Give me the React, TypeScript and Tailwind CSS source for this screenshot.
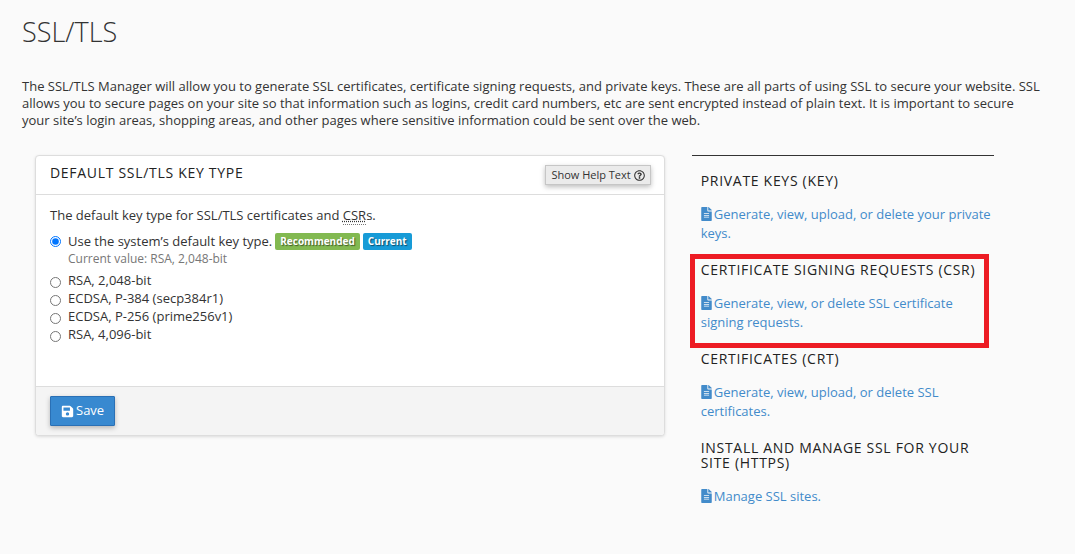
import { useState } from "react";
import { FaFileAlt, FaRegQuestionCircle, FaSave } from "react-icons/fa";

const keyTypes = [
  { value: "rsa-2048", label: "RSA, 2,048-bit" },
  { value: "ecdsa-secp384r1", label: "ECDSA, P-384 (secp384r1)" },
  { value: "ecdsa-prime256v1", label: "ECDSA, P-256 (prime256v1)" },
  { value: "rsa-4096", label: "RSA, 4,096-bit" },
];

const sections = [
  {
    title: "Private Keys (KEY)",
    link: "Generate, view, upload, or delete your private keys.",
  },
  {
    title: "Certificate Signing Requests (CSR)",
    link: "Generate, view, or delete SSL certificate signing requests.",
    highlighted: true,
  },
  {
    title: "Certificates (CRT)",
    link: "Generate, view, upload, or delete SSL certificates.",
  },
  {
    title: "Install and Manage SSL for your site (HTTPS)",
    link: "Manage SSL sites.",
  },
];

function KeyTypePanel() {
  const [keyType, setKeyType] = useState("system");

  return (
    <form
      onSubmit={(e) => e.preventDefault()}
      className="self-start overflow-hidden rounded-[4px] border border-[#dddddd] bg-white shadow-[0_1px_3px_rgba(0,0,0,0.12)]"
    >
      <div className="flex items-start justify-between border-b border-[#dddddd] py-[9px] pr-[13px] pl-[14px]">
        <h2 className="text-[14px] leading-[16px] font-medium tracking-wider text-[#222222] uppercase">
          Default SSL/TLS Key Type
        </h2>
        <button
          type="button"
          className="flex h-5 items-center gap-[3px] border border-[#c6c6c6] bg-[#ebebeb] px-[5px] text-[11px] leading-[18px] shadow-[0_2px_5px_rgba(0,0,0,0.26)]"
        >
          Show Help Text
          <FaRegQuestionCircle className="size-[11px]" />
        </button>
      </div>

      <div className="px-[14px] pt-[11px] pb-[43px]">
        <p className="mb-2 leading-[18px]">
          The default key type for SSL/TLS certificates and{" "}
          <abbr
            title="Certificate Signing Requests"
            className="border-b border-dotted border-[#777777] underline decoration-dotted"
          >
            CSR
          </abbr>
          s.
        </p>
        <div className="mb-[3px] flex items-start gap-[7px]">
          <input
            type="radio"
            id="system"
            name="keyType"
            checked={keyType === "system"}
            onChange={() => setKeyType("system")}
            className="mt-1 size-[11px]"
          />
          <div>
            <label htmlFor="system" className="flex items-end leading-[18px]">
              <span className="mr-[3px]">Use the system’s default key type.</span>
              <span className="mr-[3px] rounded-[2px] bg-[#82b951] px-[5px] text-[10px] leading-[17px] font-bold text-white [text-shadow:1px_1px_1px_rgba(0,0,0,0.5)]">
                Recommended
              </span>
              <span className="rounded-[2px] bg-[#179bd7] px-[5px] text-[10px] leading-[17px] font-bold text-white [text-shadow:1px_1px_1px_rgba(0,0,0,0.5)]">
                Current
              </span>
            </label>
            <p className="text-[12px] leading-[18px] text-[#777777]">
              Current value: RSA, 2,048-bit
            </p>
          </div>
        </div>
        {keyTypes.map((type) => (
          <div key={type.value} className="flex items-start gap-[7px]">
            <input
              type="radio"
              id={type.value}
              name="keyType"
              checked={keyType === type.value}
              onChange={() => setKeyType(type.value)}
              className="mt-[6px] size-[11px]"
            />
            <label htmlFor={type.value} className="leading-[18px]">
              {type.label}
            </label>
          </div>
        ))}
      </div>

      <div className="border-t border-[#dddddd] bg-[#f4f4f4] px-[14px] py-[9px]">
        <button
          type="submit"
          className="flex h-[30px] items-center gap-[2px] rounded-[1px] border border-[#2a70b5] bg-[#3889d0] px-[10px] text-white shadow-[0_2px_5px_rgba(0,0,0,0.26)]"
        >
          <FaSave className="size-[13px]" />
          Save
        </button>
      </div>
    </form>
  );
}

export default function App() {
  return (
    <div className="min-h-screen bg-[#fafafa] pt-4 pr-[33px] pb-8 pl-[22px] font-['Open_Sans',sans-serif] text-[13px] text-[#333333]">
      <h1 className="text-[27px] leading-[32px] font-light">SSL/TLS</h1>
      <p className="mt-[30px] leading-[17px]">
        The SSL/TLS Manager will allow you to generate SSL certificates, certificate signing
        requests, and private keys. These are all parts of using SSL to secure your website. SSL
        allows you to secure pages on your site so that information such as logins, credit card
        numbers, etc are sent encrypted instead of plain text. It is important to secure your site’s
        login areas, shopping areas, and other pages where sensitive information could be sent over
        the web.
      </p>

      <div className="mt-[26px] grid grid-cols-[25fr_12fr] gap-[27px] pr-12 pl-[13px]">
        <KeyTypePanel />

        <aside className="border-t border-[#333333] pt-[17px] pl-[9px]">
          {sections.map((section) => (
            <section key={section.title} className="relative mb-[19px]">
              <h2 className="mb-[17px] text-[14px] leading-[15px] font-medium tracking-wider text-[#222222] uppercase">
                {section.title}
              </h2>
              <a href="#" className="block leading-[19px] text-[#428bca]">
                <FaFileAlt className="mr-[2px] inline h-[14px] w-[11px] align-[-2px]" />
                {section.link}
              </a>
              {section.highlighted && (
                <div className="pointer-events-none absolute -top-2 right-[5px] -bottom-4 -left-[11px] border-5 border-[#ed1c24]" />
              )}
            </section>
          ))}
        </aside>
      </div>
    </div>
  );
}
